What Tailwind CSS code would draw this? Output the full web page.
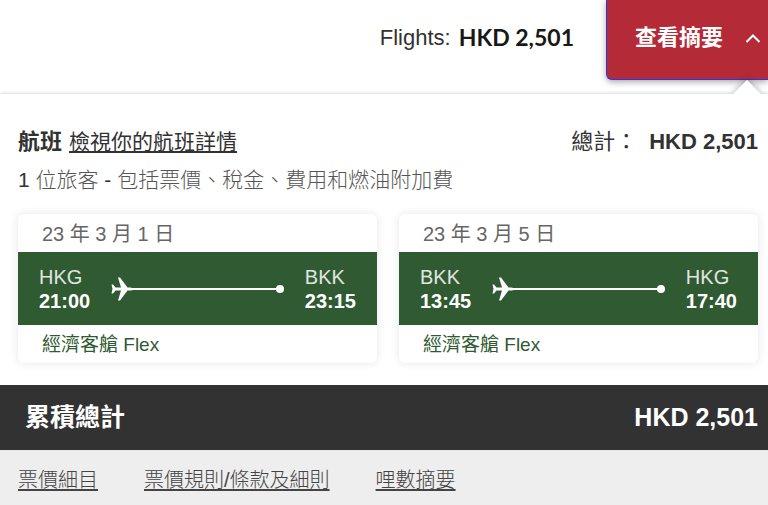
<!DOCTYPE html>
<html lang="zh-Hant">
<head>
    <meta charset="UTF-8">
    <meta name="viewport" content="width=device-width, initial-scale=1.0">
    <title>航班摘要</title>
    <script src="https://cdn.jsdelivr.net/npm/@tailwindcss/browser@4"></script>
</head>
<body class="min-h-screen flex flex-col bg-[#eeeeee] text-[#323232] font-['Liberation_Sans','Noto_Sans_CJK_TC',sans-serif]">
    <!-- Header -->
    <header class="h-[94px] flex items-start justify-end bg-white">
        <p class="h-[74px] flex items-center gap-2 mr-8 text-[22px]">
            <span>Flights:</span>
            <strong class="font-['Lato',sans-serif] text-[23px] font-bold text-[#181818]">HKD 2,501</strong>
        </p>
        <button type="button" class="w-[162px] h-20 pb-1 pl-7 flex items-center gap-[22px] bg-[#b42a36] text-white text-[22px] font-bold border-l border-b border-[#3333e6] rounded-bl-md shadow-[0_2px_6px_rgba(0,0,0,0.35)]">
            <span class="whitespace-nowrap">查看摘要</span>
            <svg class="w-4 h-3 shrink-0" viewBox="0 0 16 12" fill="none" stroke="currentColor" stroke-width="2"><path d="M1.5 10 8 3.500l6.500 6.500"/></svg>
        </button>
    </header>

    <!-- Summary panel -->
    <main class="relative bg-white shadow-[0_-1px_3px_rgba(0,0,0,0.15)]">
        <svg class="absolute right-[6px] -top-[14px] w-[30px] h-[15px] overflow-visible drop-shadow-[0_-1px_3px_rgba(0,0,0,0.3)]" viewBox="0 0 30 15"><path d="M15 0 30 15H0z" fill="#fff"/></svg>
        <section class="relative bg-white pt-8 pb-[22px] pl-[18px] pr-[10px]">
            <div class="flex items-center justify-between h-8">
                <div class="flex items-baseline gap-[7px]">
                    <h2 class="text-[22px] leading-8 font-bold">航班</h2>
                    <a href="#" class="text-[21px] leading-8 underline underline-offset-2">檢視你的航班詳情</a>
                </div>
                <p class="flex items-baseline gap-3 text-[22px] leading-8">
                    <span>總計：</span>
                    <strong>HKD 2,501</strong>
                </p>
            </div>
            <p class="mt-2 text-[21px] leading-7 font-light text-[#555555]"><span class="text-[#323232]">1</span> 位旅客 <span class="text-[#323232]">-</span> 包括票價、稅金、費用和燃油附加費</p>

            <div class="mt-5 grid grid-cols-2 gap-[22px]">
                <article class="rounded-md bg-white shadow-[0_0_10px_rgba(0,0,0,0.1)]">
                    <h3 class="h-[38px] pl-6 text-xl leading-10 text-[#666666]">23 年 3 月 1 日</h3>
                    <div class="h-[73px] pl-[21px] pr-[21px] flex items-center bg-[#305a31] text-white text-xl leading-6">
                        <p><span class="text-white/85">HKG</span><br><strong>21:00</strong></p>
                        <div class="flex-1 flex items-center ml-[21px] mr-[21px]">
                            <svg class="w-6 h-6 shrink-0" viewBox="0 0 24 24" fill="currentColor"><path d="M.5 7.500H2L4.500 10.500H10L7 .500H9L16.500 10.500c4 0 6.500.5 6.500 1.500s-2.500 1.500-6.500 1.500L9 23.500H7L10 13.500H4.500L2 16.500H.5L1.500 12z"/></svg>
                            <span class="flex-1 h-0.5 -ml-1 bg-white"></span>
                            <span class="size-2 -ml-1 rounded-full bg-white"></span>
                        </div>
                        <p><span class="text-white/85">BKK</span><br><strong>23:15</strong></p>
                    </div>
                    <p class="h-[38px] pl-6 text-[19px] leading-10 text-[#305a31]">經濟客艙 Flex</p>
                </article>
                <article class="rounded-md bg-white shadow-[0_0_10px_rgba(0,0,0,0.1)]">
                    <h3 class="h-[38px] pl-6 text-xl leading-10 text-[#666666]">23 年 3 月 5 日</h3>
                    <div class="h-[73px] pl-[21px] pr-[21px] flex items-center bg-[#305a31] text-white text-xl leading-6">
                        <p><span class="text-white/85">BKK</span><br><strong>13:45</strong></p>
                        <div class="flex-1 flex items-center ml-[21px] mr-[21px]">
                            <svg class="w-6 h-6 shrink-0" viewBox="0 0 24 24" fill="currentColor"><path d="M.5 7.500H2L4.500 10.500H10L7 .500H9L16.500 10.500c4 0 6.500.5 6.500 1.500s-2.500 1.500-6.500 1.500L9 23.500H7L10 13.500H4.500L2 16.500H.5L1.500 12z"/></svg>
                            <span class="flex-1 h-0.5 -ml-1 bg-white"></span>
                            <span class="size-2 -ml-1 rounded-full bg-white"></span>
                        </div>
                        <p><span class="text-white/85">HKG</span><br><strong>17:40</strong></p>
                    </div>
                    <p class="h-[38px] pl-6 text-[19px] leading-10 text-[#305a31]">經濟客艙 Flex</p>
                </article>
            </div>
        </section>

        <!-- Running total -->
        <div class="relative h-[65px] pl-[25px] pr-[10px] flex items-center justify-between bg-[#323232] text-white text-[25px]">
            <h2 class="font-bold">累積總計</h2>
            <strong>HKD 2,501</strong>
        </div>
    </main>

    <nav class="px-[18px] pt-[14px] flex gap-[46px] text-xl leading-8 font-light text-[#444444]">
        <a href="#" class="underline underline-offset-2">票價細目</a>
        <a href="#" class="underline underline-offset-2">票價規則/條款及細則</a>
        <a href="#" class="underline underline-offset-2">哩數摘要</a>
    </nav>
</body>
</html>
